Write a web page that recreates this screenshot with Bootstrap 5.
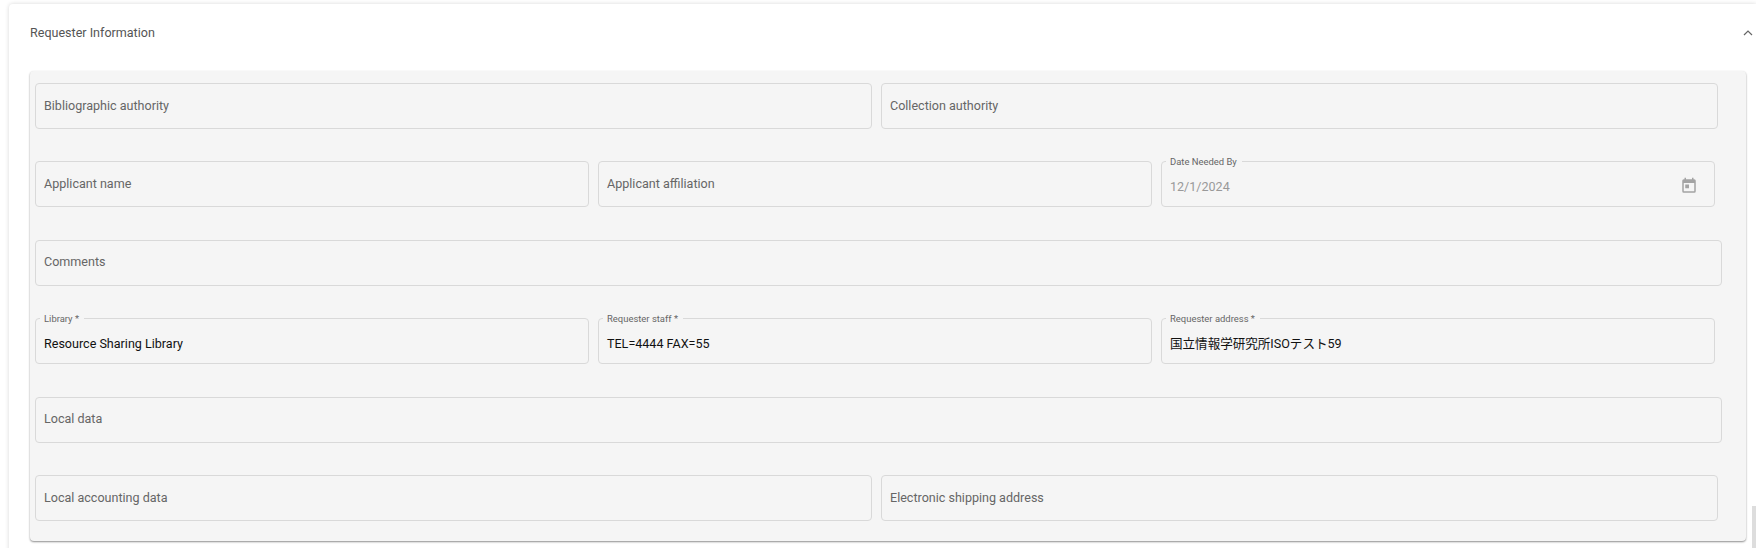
<!DOCTYPE html>
<html lang="en">
<head>
<meta charset="utf-8">
<title>Requester Information</title>
<link href="https://cdn.jsdelivr.net/npm/bootstrap@5.3.0/dist/css/bootstrap.min.css" rel="stylesheet">
<style>
html, body { height: 100%; overflow: hidden; }
body { background: #fff; font-family: Roboto, "Noto Sans CJK JP", sans-serif; font-size: 12.55px; color: #555; }
.req-shell { margin: 4px 0 0 9px; height: 560px; background: #fff; border-radius: 4px 0 0 0; box-shadow: 0 0 4px rgba(0,0,0,.16); padding: 0 10px 0 21px; }
.req-head { height: 67px; padding-bottom: 9px; margin-right: -8px; }
.req-title { font-size: 12.55px; color: #555; }
.req-body { background: #f5f5f5; border-radius: 4px; height: 470px; padding: 12px 0 0 5px; box-shadow: 0 1px 2px rgba(0,0,0,.45); }
.req-row { height: 46px; margin-bottom: 32.4px; gap: 9px; }
.w-a { width: 1683px; }
.w-b { width: 1680px; }
.w-c { width: 1687px; }
.req-field { flex: 1 1 0; min-width: 0; position: relative; border: 1px solid #d9d9d9; border-radius: 4px; padding: 0 8px; color: #666; }
.req-float { position: absolute; top: -6px; left: 4px; padding: 0 5px 0 4px; background: #f5f5f5; font-size: 9.45px; line-height: 12px; color: #666; white-space: nowrap; }
.req-value { color: #111; padding-top: 7px; }
.req-date { color: #999; padding-top: 7px; }
.req-cal { width: 18px; height: 18px; margin: 3px 8px 0 0; fill: #a3a3a3; }
.req-chev { width: 12px; height: 12px; fill: none; stroke: #666; stroke-width: 1.2; }
.req-thumb { position: fixed; right: 0; top: 506px; width: 4px; height: 42px; background: #ddd; }
</style>
</head>
<body>
<div class="req-shell">
  <div class="req-head d-flex align-items-center justify-content-between">
    <span class="req-title">Requester Information</span>
    <svg class="req-chev" viewBox="0 0 12 12" aria-hidden="true"><path d="M2 8l4-4 4 4"/></svg>
  </div>
  <div class="req-body">
    <div class="req-row w-a d-flex">
      <div class="req-field d-flex align-items-center">Bibliographic authority</div>
      <div class="req-field d-flex align-items-center">Collection authority</div>
    </div>
    <div class="req-row w-b d-flex">
      <div class="req-field d-flex align-items-center">Applicant name</div>
      <div class="req-field d-flex align-items-center">Applicant affiliation</div>
      <div class="req-field d-flex align-items-center justify-content-between">
        <span class="req-float">Date Needed By</span>
        <span class="req-date">12/1/2024</span>
        <svg class="req-cal" viewBox="0 0 24 24" aria-hidden="true"><path d="M19 3h-1V1h-2v2H8V1H6v2H5a2 2 0 0 0-2 2v14a2 2 0 0 0 2 2h14a2 2 0 0 0 2-2V5a2 2 0 0 0-2-2zm0 16H5V8h14v11zM7 10h5v5H7z"/></svg>
      </div>
    </div>
    <div class="req-row w-c d-flex">
      <div class="req-field d-flex align-items-center">Comments</div>
    </div>
    <div class="req-row w-b d-flex">
      <div class="req-field d-flex align-items-center"><span class="req-float">Library *</span><span class="req-value">Resource Sharing Library</span></div>
      <div class="req-field d-flex align-items-center"><span class="req-float">Requester staff *</span><span class="req-value">TEL=4444 FAX=55</span></div>
      <div class="req-field d-flex align-items-center"><span class="req-float">Requester address *</span><span class="req-value">国立情報学研究所ISOテスト59</span></div>
    </div>
    <div class="req-row w-c d-flex">
      <div class="req-field d-flex align-items-center">Local data</div>
    </div>
    <div class="req-row w-a d-flex">
      <div class="req-field d-flex align-items-center">Local accounting data</div>
      <div class="req-field d-flex align-items-center">Electronic shipping address</div>
    </div>
  </div>
</div>
<div class="req-thumb"></div>
<script src="https://cdn.jsdelivr.net/npm/bootstrap@5.3.0/dist/js/bootstrap.bundle.min.js"></script>
</body>
</html>
